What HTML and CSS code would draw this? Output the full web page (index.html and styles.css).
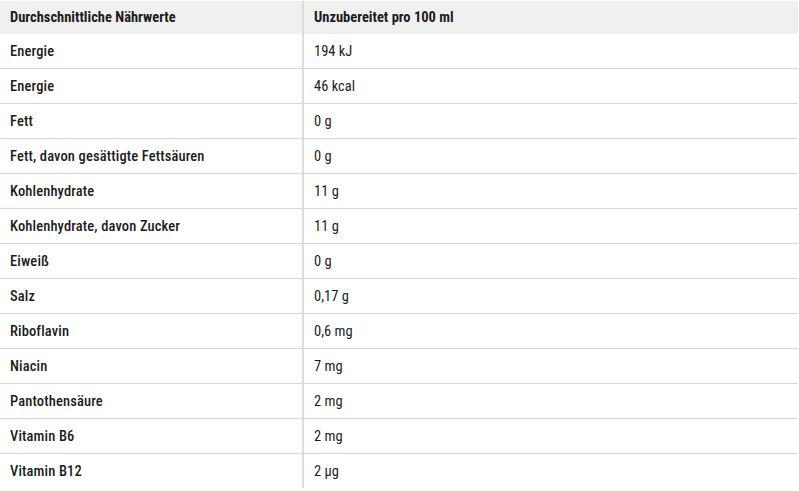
FILE: index.html
```html
<!DOCTYPE html>
<html lang="de">
<head>
<meta charset="utf-8">
<title>Nährwerte</title>
<link rel="stylesheet" href="styles.css">
</head>
<body>
<table class="nutri">
  <thead>
    <tr><th class="label">Durchschnittliche Nährwerte</th><th class="value">Unzubereitet pro 100 ml</th></tr>
  </thead>
  <tbody>
    <tr><td class="label">Energie</td><td class="value">194 kJ</td></tr>
    <tr><td class="label">Energie</td><td class="value">46 kcal</td></tr>
    <tr><td class="label">Fett</td><td class="value">0 g</td></tr>
    <tr><td class="label">Fett, davon gesättigte Fettsäuren</td><td class="value">0 g</td></tr>
    <tr><td class="label">Kohlenhydrate</td><td class="value">11 g</td></tr>
    <tr><td class="label">Kohlenhydrate, davon Zucker</td><td class="value">11 g</td></tr>
    <tr><td class="label">Eiweiß</td><td class="value">0 g</td></tr>
    <tr><td class="label">Salz</td><td class="value">0,17 g</td></tr>
    <tr><td class="label">Riboflavin</td><td class="value">0,6 mg</td></tr>
    <tr><td class="label">Niacin</td><td class="value">7 mg</td></tr>
    <tr><td class="label">Pantothensäure</td><td class="value">2 mg</td></tr>
    <tr><td class="label">Vitamin B6</td><td class="value">2 mg</td></tr>
    <tr><td class="label">Vitamin B12</td><td class="value">2 µg</td></tr>
  </tbody>
</table>
</body>
</html>
```
FILE: styles.css
```css
html, body {
  margin: 0;
  padding: 0;
  background: #fff;
}
body {
  padding-top: 1px;
  font-family: "Roboto Condensed", "Roboto", "Liberation Sans", sans-serif;
  font-size: 14.5px;
  color: #1c1c1c;
}
.nutri {
  width: 798px;
  border-collapse: collapse;
  table-layout: fixed;
}
.nutri th,
.nutri td {
  padding: 0 10px;
  height: 34px;
  text-align: left;
  vertical-align: middle;
  white-space: nowrap;
}
.nutri th {
  height: 33px;
  background: #f0f0f0;
  font-weight: 700;
}
.nutri .label {
  width: 282px;
  border-right: 2px solid #dcdcdc;
}
.nutri td.label {
  font-weight: 500;
  letter-spacing: 0.14px;
}
.nutri td.value {
  font-weight: 400;
}
.nutri tbody tr {
  border-bottom: 1px solid #d6d6d6;
}
.nutri tbody tr:last-child {
  border-bottom: none;
}
```
